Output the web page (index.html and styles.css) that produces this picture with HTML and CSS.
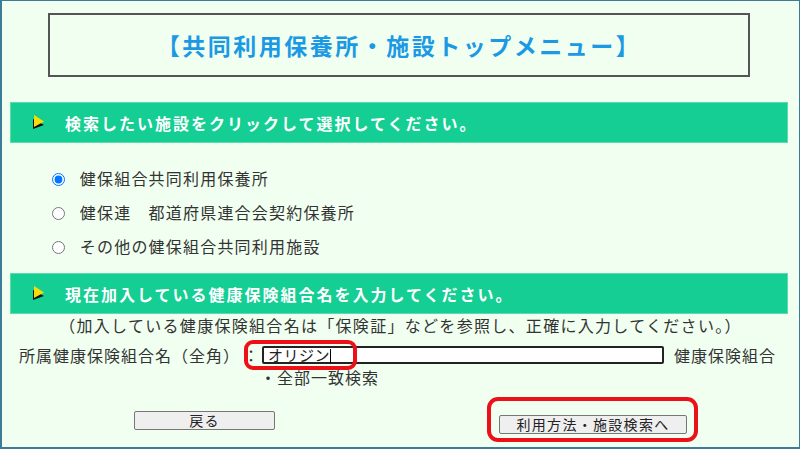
FILE: index.html
```html
<!DOCTYPE html>
<html lang="ja">
<head>
    <meta charset="UTF-8">
    <meta name="viewport" content="width=device-width, initial-scale=1.0">
    <title>共同利用保養所・施設トップメニュー</title>

    <!-- Custom CSS for styling -->
    <link rel="stylesheet" href="styles.css">
</head>
<body>
    <div class="page">
        <div class="title-box">
            <h1>【共同利用保養所・施設トップメニュー】</h1>
        </div>

        <div class="section-bar">
            <svg class="arrow" width="13" height="15" viewBox="0 0 13 15">
                <polygon points="1,4 12,10 1,14" fill="#111"/>
                <polygon points="2,0 12,6.5 2,12" fill="#f7dc0a"/>
            </svg>
            <span>検索したい施設をクリックして選択してください。</span>
        </div>

        <ul class="facility-list">
            <li><label><input type="radio" name="facility" checked> 健保組合共同利用保養所</label></li>
            <li><label><input type="radio" name="facility"> 健保連　都道府県連合会契約保養所</label></li>
            <li><label><input type="radio" name="facility"> その他の健保組合共同利用施設</label></li>
        </ul>

        <div class="section-bar">
            <svg class="arrow" width="13" height="15" viewBox="0 0 13 15">
                <polygon points="1,4 12,10 1,14" fill="#111"/>
                <polygon points="2,0 12,6.5 2,12" fill="#f7dc0a"/>
            </svg>
            <span>現在加入している健康保険組合名を入力してください。</span>
        </div>

        <p class="note">（加入している健康保険組合名は「保険証」などを参照し、正確に入力してください。）</p>

        <div class="union-row">
            <span class="union-label">所属健康保険組合名（全角）</span>
            <span class="colon">：</span>
            <span class="field-wrap">
                <span class="text-field">オリジン<span class="caret"></span></span>
                <span class="mark mark-field"></span>
            </span>
            <span class="union-suffix">健康保険組合</span>
        </div>

        <p class="match">・全部一致検索</p>

        <div class="buttons">
            <button class="btn btn-back">戻る</button>
            <span class="btn-wrap">
                <button class="btn btn-next">利用方法・施設検索へ</button>
                <span class="mark mark-btn"></span>
            </span>
        </div>
    </div>
</body>
</html>
```

FILE: styles.css
```css
body {
    font-family: "Noto Sans CJK JP", "Noto Sans", sans-serif;
    margin: 0;
    padding: 0;
    background-color: #f0fff0;
    color: #333;
}

.page {
    box-sizing: border-box;
    height: 449px;
    border: 1px solid #3d7c99;
    border-left-width: 2px;
    border-bottom-width: 2px;
    background-color: #f0fff0;
    overflow: hidden;
}

/* Title */
.title-box {
    margin: 12px 49px 0 46px;
    height: 64px;
    box-sizing: border-box;
    border: 2px solid #555;
}

h1 {
    margin: 0;
    line-height: 60px;
    text-align: center;
    font-size: 23px;
    letter-spacing: 2.5px;
    color: #1b99e4;
}

/* Green section bars */
.section-bar {
    display: flex;
    align-items: center;
    height: 41px;
    box-sizing: border-box;
    margin: 25px 11px 0 8px;
    padding-left: 21px;
    background-color: #14ce93;
    border: 1px solid #5bdcae;
    color: #fff;
    font-size: 16px;
    font-weight: bold;
    letter-spacing: 2px;
}

.arrow {
    margin-right: 20px;
    margin-top: -1px;
}

/* Radio list */
.facility-list {
    list-style: none;
    margin: 18px 0 0 0;
    padding: 0 0 0 48px;
}

.facility-list li {
    height: 34px;
    line-height: 34px;
    font-size: 16px;
    letter-spacing: 1.2px;
}

.facility-list input {
    width: 13px;
    height: 13px;
    margin: 0 10px 0 2px;
    vertical-align: -1px;
}

.facility-list + .section-bar {
    margin-top: 10px;
}

/* Union name input */
.note {
    margin: 0;
    line-height: 22px;
    text-align: center;
    font-size: 16px;
    letter-spacing: 1.3px;
}

.union-row {
    display: flex;
    align-items: center;
    height: 22px;
    margin-top: 8px;
    padding-left: 17px;
    font-size: 16px;
    letter-spacing: 1px;
}

.colon {
    margin-left: 3px;
}

.field-wrap {
    position: relative;
    margin-left: 2px;
}

.text-field {
    display: block;
    box-sizing: border-box;
    width: 402px;
    height: 18px;
    padding-left: 4px;
    border: 2px solid #222;
    border-radius: 2px;
    background-color: #fff;
    color: #222;
    font-size: 15px;
    line-height: 14px;
    letter-spacing: 0.5px;
}

.caret {
    display: inline-block;
    width: 1px;
    height: 14px;
    background-color: #000;
    vertical-align: -2px;
}

.union-suffix {
    margin-left: 10px;
}

.match {
    margin: 0 0 0 258px;
    line-height: 22px;
    font-size: 16px;
    letter-spacing: 1px;
}

/* Buttons */
.buttons {
    display: flex;
    margin: 23px 0 0 132px;
}

.btn {
    box-sizing: border-box;
    height: 19px;
    padding: 0;
    font-family: inherit;
    font-size: 14px;
    line-height: 15px;
    letter-spacing: 1.3px;
    color: #222;
    background-color: #efefef;
    border: 1px solid #767676;
    border-radius: 2px;
}

.btn-back {
    width: 141px;
}

.btn-wrap {
    position: relative;
    margin-left: 224px;
}

.btn-next {
    width: 188px;
}

/* Red highlight marks drawn over the screenshot */
.mark {
    position: absolute;
    box-sizing: border-box;
    border: 4px solid #ec1118;
    border-radius: 9px;
    pointer-events: none;
}

.mark-field {
    left: -18px;
    top: -6px;
    width: 113px;
    height: 30px;
}

.mark-btn {
    left: -12px;
    top: -14px;
    width: 211px;
    height: 45px;
    border-radius: 11px;
}
```
